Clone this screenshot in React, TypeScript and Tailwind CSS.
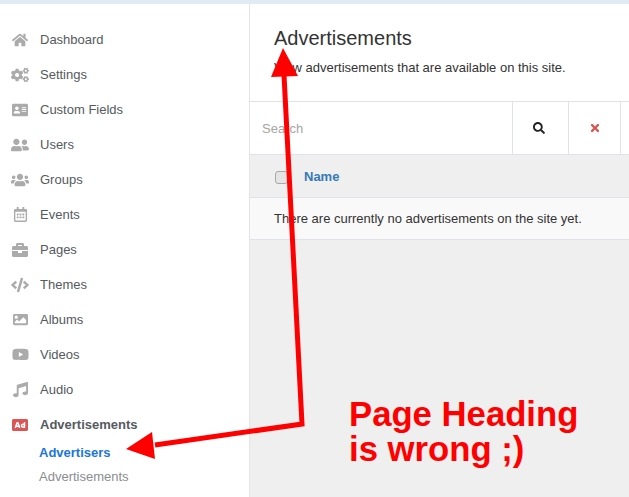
import React from 'react';
import {
  FaAd,
  FaAddressCard,
  FaBriefcase,
  FaCode,
  FaCogs,
  FaHome,
  FaImage,
  FaMusic,
  FaRegCalendarAlt,
  FaSearch,
  FaTimes,
  FaUserFriends,
  FaUsers,
  FaYoutube,
} from 'react-icons/fa';

const font = { fontFamily: '"Liberation Sans", Arial, sans-serif' };

const menu = [
  { name: 'Dashboard', Icon: FaHome, size: 16 },
  { name: 'Settings', Icon: FaCogs, size: 18 },
  { name: 'Custom Fields', Icon: FaAddressCard, size: 16 },
  { name: 'Users', Icon: FaUserFriends, size: 18 },
  { name: 'Groups', Icon: FaUsers, size: 18 },
  { name: 'Events', Icon: FaRegCalendarAlt, size: 15 },
  { name: 'Pages', Icon: FaBriefcase, size: 16 },
  { name: 'Themes', Icon: FaCode, size: 18 },
  { name: 'Albums', Icon: FaImage, size: 15 },
  { name: 'Videos', Icon: FaYoutube, size: 17 },
  { name: 'Audio', Icon: FaMusic, size: 15 },
];

const MenuItem = ({ name, Icon, size }: { name: string; Icon: React.ElementType; size: number }) => {
  return (
    <li className="flex h-[35px] items-center">
      <span className="flex w-[40px] justify-center text-[#ababab]">
        <Icon size={size} />
      </span>
      <span className="text-[13px] text-[#555a60]">{name}</span>
    </li>
  );
};

const Sidebar = () => {
  return (
    <aside className="h-full w-[250px] shrink-0 border-r border-[#e4e4e4] bg-white pt-[18px]">
      <ul>
        {menu.map((item) => (
          <MenuItem key={item.name} {...item} />
        ))}
        <li className="flex h-[35px] items-center">
          <span className="flex w-[40px] justify-center text-[#dc5454]">
            <FaAd size={16} />
          </span>
          <span className="text-[13px] font-bold text-[#555a60]">Advertisements</span>
        </li>
      </ul>
      <div className="-mt-[1px] pl-[39px]">
        <div className="flex h-[24px] items-center text-[13px] font-bold text-[#1a76d8]">Advertisers</div>
        <div className="flex h-[24px] items-center text-[13px] text-[#8a8d91]">Advertisements</div>
      </div>
    </aside>
  );
};

const Main = () => {
  return (
    <main className="min-w-0 flex-1 bg-[#efefef]">
      {/* heading */}
      <div className="h-[97px] bg-white pl-[24px] pt-[21px]">
        <h1 className="text-[20px] leading-[26px] text-[#333333]">Advertisements</h1>
        <p className="mt-[8px] text-[13px] leading-[18px] text-[#333333]">
          View advertisements that are available on this site.
        </p>
      </div>

      {/* search */}
      <div className="flex h-[54px] border-y border-[#dfe3e8] bg-white">
        <div className="flex w-[262px] items-center pl-[12px] pt-[2px] text-[13px] text-[#a5a5a5]">Search</div>
        <div className="flex w-[56px] items-center justify-center border-l border-[#dfe3e8] pr-[3px] text-[#222222]">
          <FaSearch size={12} />
        </div>
        <div className="flex w-[52px] items-center justify-center border-l border-[#dfe3e8] pl-[1px] text-[#d9534f]">
          <FaTimes size={12} />
        </div>
        <div className="flex-1 border-l border-[#dfe3e8]" />
      </div>

      {/* table */}
      <div className="flex h-[43px] items-center border-b border-[#dfe3e8] pl-[25px] pt-[2px]">
        <span className="h-[13px] w-[13px] rounded-[3px] border border-[#a9a9a9] bg-[#e4e4e4]" />
        <span className="ml-[16px] text-[13px] font-bold text-[#337ab7]">Name</span>
      </div>
      <div className="flex h-[42px] items-center border-b border-[#dfe3e8] bg-[#f9f9f9] pl-[24px] text-[13px] text-[#333333]">
        There are currently no advertisements on the site yet.
      </div>
    </main>
  );
};

const Annotation = () => {
  return (
    <>
      <svg className="absolute left-0 top-0" width="629" height="497" viewBox="0 0 629 497">
        <path d="M284 75 L302 424 L155 445" fill="none" stroke="#ff0000" strokeWidth="5" />
        <polygon points="283,48 271,77 298,76" fill="#ff0000" />
        <polygon points="126,449 152,432 155,459" fill="#ff0000" />
      </svg>
      <div className="absolute left-[349px] top-[397px] text-[34.7px] font-bold leading-[35px] text-[#ff0000]">
        Page Heading
        <br />
        is wrong ;)
      </div>
    </>
  );
};

const App = () => {
  return (
    <div className="relative flex h-[497px] w-[629px] flex-col overflow-hidden bg-white" style={font}>
      <div className="h-[4px] shrink-0 bg-[#e1ebf4]" />
      <div className="flex min-h-0 flex-1">
        <Sidebar />
        <Main />
      </div>
      <Annotation />
    </div>
  );
};

export default App;
